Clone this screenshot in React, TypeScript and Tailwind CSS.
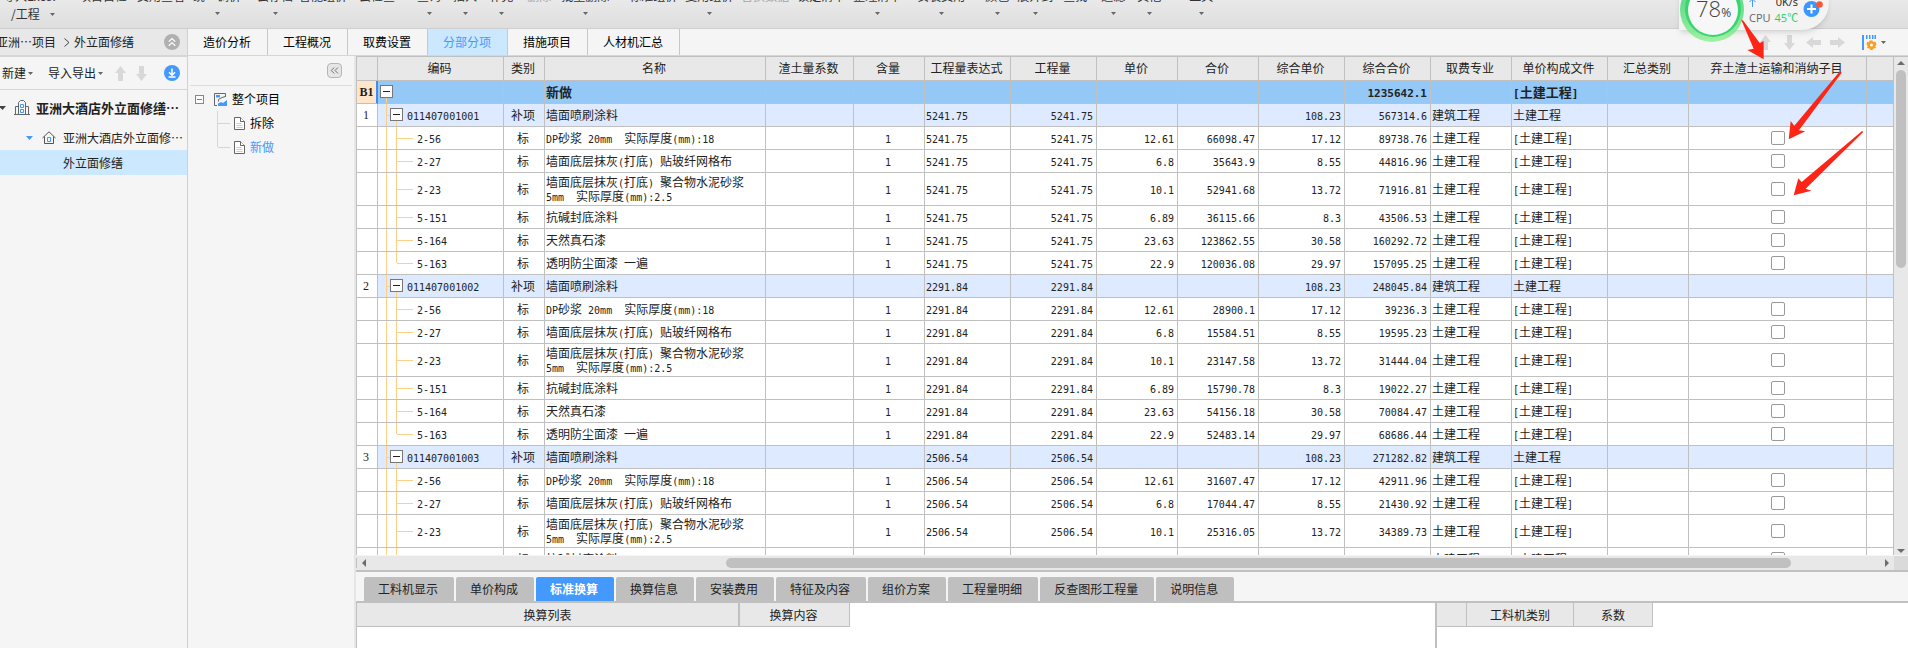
import React from "react";
import clsx from "clsx";
import { ChevronsLeft, ChevronsUp } from "lucide-react";

const ribbonItems = [
  { label: "项目自检", gap: "ml-5" },
  { label: "费用查看", gap: "ml-2.5" },
  { label: "统一调价", gap: "ml-2", menu: true },
  { label: "云存档", gap: "ml-4", menu: true },
  { label: "智能组价", gap: "ml-1.5" },
  { label: "云检查", gap: "ml-3" },
  { label: "查询", gap: "ml-5.5", menu: true },
  { label: "插入", gap: "ml-3", menu: true },
  { label: "补充", gap: "ml-3", menu: true },
  { label: "删除", gap: "ml-3.5", disabled: true },
  { label: "批量删除", gap: "ml-2.5", menu: true },
  { label: "标准组价", gap: "ml-5" },
  { label: "复用组价", gap: "ml-2", menu: true },
  { label: "替换数据", gap: "ml-2", disabled: true },
  { label: "锁定清单", gap: "ml-2" },
  { label: "整理清单", gap: "ml-2", menu: true },
  { label: "安装费用", gap: "ml-4", menu: true },
  { label: "颜色", gap: "ml-5", menu: true },
  { label: "展开到", gap: "ml-2", menu: true },
  { label: "查找", gap: "ml-2.5" },
  { label: "过滤", gap: "ml-3.5", menu: true },
  { label: "其他", gap: "ml-3", menu: true },
  { label: "工具", gap: "ml-7", menu: true },
];

const pageTabs = ["造价分析", "工程概况", "取费设置", "分部分项", "措施项目", "人材机汇总"];

const detailTabs = [
  "工料机显示",
  "单价构成",
  "标准换算",
  "换算信息",
  "安装费用",
  "特征及内容",
  "组价方案",
  "工程量明细",
  "反查图形工程量",
  "说明信息",
];

const columns = [
  { title: "", width: "w-[21px]" },
  { title: "编码", width: "w-[126px]" },
  { title: "类别", width: "w-[41px]" },
  { title: "名称", width: "w-[221px]" },
  { title: "渣土量系数", width: "w-[88px]" },
  { title: "含量", width: "w-[71px]" },
  { title: "工程量表达式", width: "w-[86px]" },
  { title: "工程量", width: "w-[86px]" },
  { title: "单价", width: "w-[81px]" },
  { title: "合价", width: "w-[81px]" },
  { title: "综合单价", width: "w-[86px]" },
  { title: "综合合价", width: "w-[86px]" },
  { title: "取费专业", width: "w-[81px]" },
  { title: "单价构成文件", width: "w-[96px]" },
  { title: "汇总类别", width: "w-[81px]" },
  { title: "弃土渣土运输和消纳子目", width: "w-[178px]" },
  { title: "", width: "" },
];

const items = [
  { code: "2-56", name: "DP砂浆 20mm  实际厚度(mm):18", price: "12.61", full: "17.12" },
  { code: "2-27", name: "墙面底层抹灰(打底) 贴玻纤网格布", price: "6.8", full: "8.55" },
  { code: "2-23", name: "墙面底层抹灰(打底) 聚合物水泥砂浆\n5mm  实际厚度(mm):2.5", price: "10.1", full: "13.72", tall: true },
  { code: "5-151", name: "抗碱封底涂料", price: "6.89", full: "8.3" },
  { code: "5-164", name: "天然真石漆", price: "23.63", full: "30.58" },
  { code: "5-163", name: "透明防尘面漆 一遍", price: "22.9", full: "29.97" },
];

interface Group {
  no: number;
  code: string;
  quantity: string;
  total: string;
  amounts: [string, string][];
}

const groups: Group[] = [
  {
    no: 1,
    code: "011407001001",
    quantity: "5241.75",
    total: "567314.6",
    amounts: [
      ["66098.47", "89738.76"],
      ["35643.9", "44816.96"],
      ["52941.68", "71916.81"],
      ["36115.66", "43506.53"],
      ["123862.55", "160292.72"],
      ["120036.08", "157095.25"],
    ],
  },
  {
    no: 2,
    code: "011407001002",
    quantity: "2291.84",
    total: "248045.84",
    amounts: [
      ["28900.1", "39236.3"],
      ["15584.51", "19595.23"],
      ["23147.58", "31444.04"],
      ["15790.78", "19022.27"],
      ["54156.18", "70084.47"],
      ["52483.14", "68686.44"],
    ],
  },
  {
    no: 3,
    code: "011407001003",
    quantity: "2506.54",
    total: "271282.82",
    amounts: [
      ["31607.47", "42911.96"],
      ["17044.47", "21430.92"],
      ["25316.05", "34389.73"],
      ["17270.06", "20804.28"],
    ],
  },
];

// Latin runs are set half as wide as the Chinese characters around them
const GridText = ({ text, bold }: { text: string; bold?: boolean }) => (
  <span className={clsx("whitespace-pre", bold && "font-bold text-[13px]")}>
    {text.split(/([\x20-\x7e]+)/).map((run, i) =>
      i % 2 ? (
        <span
          key={i}
          className={clsx("leading-none font-['DejaVu_Sans_Mono',monospace]", bold ? "text-[11px]" : "text-[10px]")}
        >
          {run}
        </span>
      ) : (
        run
      ),
    )}
  </span>
);

const Caret = ({ className = "text-[#666]" }: { className?: string }) => (
  <svg width="5" height="3" viewBox="0 0 5 3" fill="currentColor" className={clsx("shrink-0", className)}>
    <path d="M0 0h5L2.5 3z" />
  </svg>
);

const BlockArrow = ({ dir }: { dir: "up" | "down" | "left" | "right" }) => (
  <svg
    width="15"
    height="15"
    viewBox="0 0 15 15"
    fill="#d8d8d8"
    className={clsx(dir === "down" && "rotate-180", dir === "left" && "-rotate-90", dir === "right" && "rotate-90")}
  >
    <path d="M7.5 0 13 7h-3v8H5V7H2z" />
  </svg>
);

const ScrollArrow = ({ d }: { d: string }) => (
  <svg width="8" height="8" viewBox="0 0 8 8" fill="#6b6b75" className="shrink-0">
    <path d={d} />
  </svg>
);

const FileIcon = () => (
  <svg width="11" height="13" viewBox="0 0 11 13" fill="#fff" stroke="#666">
    <path d="M.5.5h6l4 4v8H.5z" />
    <path d="M6.5.5v4h4" />
    <path d="M2.5 6.5h5M2.5 8.5h6M2.5 10.5h6" stroke="#ccc" />
  </svg>
);

const Toggle = () => (
  <button aria-label="折叠" className="flex size-[13px] shrink-0 items-center justify-center border border-[#777] bg-white">
    <span className="h-px w-[7px] bg-[#222]" />
  </button>
);

const Ribbon = () => (
  <header className="h-[29px] shrink-0 overflow-hidden border-b border-[#cfcfcf] bg-linear-to-b from-[#e9e9e9] to-[#dedede] text-[#333]">
    <div className="-mt-2.5 flex items-start whitespace-nowrap leading-3">
      <button className="ml-[3px] w-14 text-left">
        <span className="block">导入Excel</span>
        <span className="mt-1.5 ml-2 flex items-center gap-2.5">
          /工程
          <Caret />
        </span>
      </button>
      {ribbonItems.map((item) => (
        <button
          key={item.label}
          disabled={item.disabled}
          className={clsx("flex flex-col items-center gap-2.5", item.gap, item.disabled && "text-[#a5a5a5]")}
        >
          {item.label}
          {item.menu && <Caret />}
        </button>
      ))}
    </div>
  </header>
);

const Sidebar = () => (
  <aside className="flex w-[188px] shrink-0 flex-col border-r border-[#d0d0d0]">
    <div className="flex h-7 items-center overflow-hidden border-b-2 border-[#d6d6d6] bg-[#e8e8e8] pr-[7px]">
      <span className="-ml-1 whitespace-nowrap">亚洲…项目</span>
      <svg width="6" height="9" viewBox="0 0 6 9" fill="none" stroke="#444" className="ml-2">
        <path d="m.5.5 4.5 4-4.5 4" />
      </svg>
      <span className="ml-1">外立面修缮</span>
      <button aria-label="收起" className="ml-auto flex size-4 items-center justify-center rounded-full bg-[#b0b0b0] text-white">
        <ChevronsUp size={14} />
      </button>
    </div>
    <div className="flex h-[33px] items-center border-b border-[#d6d6d6] pr-[7px] pl-0.5">
      <button className="flex items-center gap-0.5 whitespace-nowrap">
        新建
        <Caret />
      </button>
      <button className="ml-[15px] flex items-center gap-0.5 whitespace-nowrap">
        导入导出
        <Caret />
      </button>
      <button aria-label="上移" className="ml-2.5">
        <BlockArrow dir="up" />
      </button>
      <button aria-label="下移" className="ml-1.5">
        <BlockArrow dir="down" />
      </button>
      <button aria-label="下载" className="ml-auto">
        <svg width="16" height="16" viewBox="0 0 16 16" fill="none" stroke="#fff" strokeWidth="1.5">
          <circle cx="8" cy="8" r="8" fill="#4499ff" stroke="none" />
          <path d="M8 3.500V10M5 7.200 8 10.200l3-3M4.500 12h7" />
        </svg>
      </button>
    </div>
    <ul>
      <li className="flex h-[35px] items-center">
        <svg width="6" height="4" viewBox="0 0 6 4" fill="#444">
          <path d="M-1 0h7L2.500 4z" />
        </svg>
        <svg width="16" height="15" viewBox="0 0 16 15" fill="none" stroke="#666" className="ml-2">
          <path d="M0 14.500h16M1.500 14.500v-8h3M14.500 14.500v-8h-3M4.500 14.500v-12l2-2h3l2 2v12" />
          <path d="M6.500 4.500h3v3h-3zM6.500 9.500h3v3h-3z" stroke="#4499ff" />
        </svg>
        <span className="ml-1.5 text-[13px] font-bold whitespace-nowrap">亚洲大酒店外立面修缮…</span>
      </li>
      <li className="flex h-[25px] items-center">
        <svg width="7" height="4" viewBox="0 0 7 4" fill="#4499ff" className="ml-[26px]">
          <path d="M0 0h7L3.500 4z" />
        </svg>
        <svg width="14" height="13" viewBox="0 0 14 13" fill="none" stroke="#555" className="ml-[9px]">
          <path d="M.5 7 7 .8 13.500 7M2.500 5.500v7h9v-7" />
          <path d="M5.500 6.500h3v4h-3z" stroke="#4499ff" />
        </svg>
        <span className="ml-[7px] whitespace-nowrap">亚洲大酒店外立面修…</span>
      </li>
      <li className="flex h-[25px] items-center bg-[#cce8ff] pl-[63px]">外立面修缮</li>
    </ul>
  </aside>
);

const ProjectTree = () => (
  <nav className="w-[168px] shrink-0 border-r-2 border-[#e6e6e6] px-0.5 text-black">
    <div className="flex h-[30px] items-center justify-end border-b border-[#dcdcdc] pr-2.5">
      <button aria-label="收起" className="flex size-[15px] items-center justify-center rounded-sm border border-[#b5b5b5] bg-[#e6e6e6] text-[#555]">
        <ChevronsLeft size={13} strokeWidth={1.5} />
      </button>
    </div>
    <div className="mt-px flex h-6 items-center">
      <button aria-label="折叠" className="ml-[5px] flex size-[9px] items-center justify-center border border-[#888] bg-white">
        <span className="h-px w-[5px] bg-[#2b9fd9]" />
      </button>
      <svg width="13" height="13" viewBox="0 0 13 13" fill="none" stroke="#666" className="ml-2.5">
        <path d="M11.500 4V.5H.5v12H3M11.500 3.500 8 4.500 4.500 6.500v2" />
        <path d="M4 13v-2.500L7 9l2 1 4-3v6zM2 2h4v2.500H2z" fill="#4499ff" stroke="none" />
      </svg>
      <span className="ml-[5px]">整个项目</span>
    </div>
    <ul>
      {["拆除", "新做"].map((name, i) => (
        <li key={name} className="flex h-6 items-center">
          <span className={clsx("ml-[27px] w-px self-start bg-[#ffcf87]", i ? "h-3" : "h-6")} />
          <span className="h-px w-3 bg-[#ffcf87]" />
          <span className="ml-1">
            <FileIcon />
          </span>
          <a href="#" className={clsx("ml-[5px]", i === 1 && "text-[#4499ff]")}>
            {name}
          </a>
        </li>
      ))}
    </ul>
  </nav>
);

const TabBar = () => (
  <div className="flex h-[27px] shrink-0 border-b border-[#d6d6d6] text-black">
    {pageTabs.map((tab) => (
      <button
        key={tab}
        className={clsx(
          "border-r border-[#c8c8c8] pr-4 pl-[15px] whitespace-nowrap",
          tab === "分部分项" && "bg-[#cce8ff] text-[#4499ff]",
        )}
      >
        {tab}
      </button>
    ))}
    <div className="ml-auto flex items-center gap-[9px] pr-[22px]">
      <button aria-label="上移">
        <BlockArrow dir="up" />
      </button>
      <button aria-label="下移">
        <BlockArrow dir="down" />
      </button>
      <button aria-label="左移">
        <BlockArrow dir="left" />
      </button>
      <button aria-label="右移">
        <BlockArrow dir="right" />
      </button>
      <button aria-label="列设置" className="ml-2 flex items-center gap-1">
        <svg width="15" height="15" viewBox="0 0 15 15">
          <path d="M0 0h2v15H0zM4 0h1.500v4H4zM7 0h1.500v4H7zM10 0h1.500v4H10zM12.500 0H14v4h-1.500z" fill="#4499ff" />
          <path d="M7.500 5.500h3l.5 1.500 2.500-.2L14.500 9.500 13.200 11l.8 2-2.500.5-1 1.500h-2l-1-1.500-2.500-.5.700-2L4.500 9.500 5 7l2 .2z" fill="#ff9d1e" />
          <circle cx="9.500" cy="10" r="1.500" fill="#fff" />
        </svg>
        <Caret />
      </button>
    </div>
  </div>
);

const Cell = ({ children, className }: { children?: React.ReactNode; className?: string }) => (
  <td className={clsx("overflow-hidden border-r border-b border-[#c0c0c0] pt-0 pr-[3px] pb-px pl-px", className)}>
    {children}
  </td>
);

const Num = ({ value, bold }: { value?: string; bold?: boolean }) => (
  <Cell className="text-right">{value && <GridText text={value} bold={bold} />}</Cell>
);

const Guide = ({ className }: { className: string }) => <span className={clsx("shrink-0 bg-[#ffcf87]", className)} />;

const GroupRows = ({ group }: { group: Group }) => (
  <>
    <tr className="bg-[#deeaff]">
      <Cell className="bg-white text-center font-['Liberation_Serif',serif]">{group.no}</Cell>
      <td className="border-r border-b border-[#c0c0c0] p-0">
        <div className="flex h-[22px] items-center pl-2">
          <Guide className="h-full w-px" />
          <Guide className="h-px w-[3px]" />
          <div className="flex h-full flex-col items-center pt-1">
            <Toggle />
            <Guide className="h-[5px] w-px" />
          </div>
          <span className="pb-px pl-1">
            <GridText text={group.code} />
          </span>
        </div>
      </td>
      <Cell className="text-center">补项</Cell>
      <Cell>墙面喷刷涂料</Cell>
      <Cell />
      <Cell />
      <Cell>
        <GridText text={group.quantity} />
      </Cell>
      <Num value={group.quantity} />
      <Cell />
      <Cell />
      <Num value="108.23" />
      <Num value={group.total} />
      <Cell>建筑工程</Cell>
      <Cell>土建工程</Cell>
      <Cell />
      <Cell />
      <Cell />
    </tr>
    {group.amounts.map(([amount, total], i) => {
      const item = items[i];
      return (
        <tr key={item.code} className="bg-white">
          <Cell />
          <td className="border-r border-b border-[#c0c0c0] p-0">
            <div className={clsx("flex items-center pl-2", item.tall ? "h-8" : "h-[22px]")}>
              <Guide className="h-full w-px" />
              <Guide className={clsx("ml-[9px] w-px self-start", i === items.length - 1 ? "h-1/2" : "h-full")} />
              <Guide className="h-px w-4" />
              <span className="pb-px pl-1">
                <GridText text={item.code} />
              </span>
            </div>
          </td>
          <Cell className="text-center">标</Cell>
          <Cell className="leading-[14px]">
            <GridText text={item.name} />
          </Cell>
          <Cell />
          <Cell className="text-center">
            <GridText text="1" />
          </Cell>
          <Cell>
            <GridText text={group.quantity} />
          </Cell>
          <Num value={group.quantity} />
          <Num value={item.price} />
          <Num value={amount} />
          <Num value={item.full} />
          <Num value={total} />
          <Cell>土建工程</Cell>
          <Cell>
            <GridText text="[土建工程]" />
          </Cell>
          <Cell />
          <td className="border-r border-b border-[#c0c0c0] p-0">
            <input
              type="checkbox"
              aria-label={`弃土渣土运输和消纳子目 ${item.code}`}
              className="mx-auto block size-3.5 appearance-none rounded-xs border border-[#999] bg-white"
            />
          </td>
          <Cell />
        </tr>
      );
    })}
  </>
);

const CostTable = () => (
  <div className="min-w-0 flex-1 overflow-hidden border-l border-[#c0c0c0] bg-white">
    <table className="w-full table-fixed border-separate border-spacing-0 leading-4 whitespace-nowrap text-[#222]">
      <colgroup>
        {columns.map((col, i) => (
          <col key={i} className={col.width} />
        ))}
      </colgroup>
      <thead>
        <tr className="h-6 bg-[#e8e8e8]">
          {columns.map((col, i) => (
            <th key={i} className="border-r border-b border-[#c0c0c0] p-0 pr-0.5 pb-0.5 font-normal">
              {col.title}
            </th>
          ))}
        </tr>
      </thead>
      <tbody>
        <tr className="bg-[#93c8f7]">
          <td className="border-r-2 border-b border-r-[#3d8ff5] border-b-[#c0c0c0] bg-[#ffe6c8] p-0 text-center font-['Liberation_Serif',serif] font-bold">
            B1
          </td>
          <td className="border-r border-b border-[#c0c0c0] p-0">
            <div className="flex h-[22px] pl-0.5">
              <div className="flex flex-col items-center pt-1">
                <Toggle />
                <Guide className="h-[5px] w-px" />
              </div>
            </div>
          </td>
          <Cell />
          <Cell>
            <GridText text="新做" bold />
          </Cell>
          <Cell />
          <Cell />
          <Cell />
          <Cell />
          <Cell />
          <Cell />
          <Cell />
          <Num value="1235642.1" bold />
          <Cell />
          <Cell>
            <GridText text="[土建工程]" bold />
          </Cell>
          <Cell />
          <Cell />
          <Cell />
        </tr>
        {groups.map((group) => (
          <GroupRows key={group.no} group={group} />
        ))}
      </tbody>
    </table>
  </div>
);

const DetailPanel = () => (
  <section className="h-[78px] shrink-0 border-t-2 border-[#c0c0c0]">
    <div className="flex h-[31px] items-end gap-0.5 border-b-2 border-[#c0c0c0] pl-2">
      {detailTabs.map((tab) => (
        <button
          key={tab}
          className={clsx(
            "h-6 rounded-t-xs pr-4 pl-3.5 whitespace-nowrap",
            tab === "标准换算" ? "bg-[#4499ff] font-bold text-white" : "bg-[#bfbfbf] text-[#222]",
          )}
        >
          {tab}
        </button>
      ))}
    </div>
    <div className="flex h-[45px] bg-white">
      <div className="flex-1 border-l border-[#c0c0c0]">
        <table className="border-separate border-spacing-0">
          <thead>
            <tr className="h-6 bg-[#e8e8e8]">
              <th className="w-[383px] border-r-2 border-b border-[#c0c0c0] p-0 font-normal">换算列表</th>
              <th className="w-[110px] border-r border-b border-[#c0c0c0] p-0 pr-0.5 font-normal">换算内容</th>
            </tr>
          </thead>
        </table>
      </div>
      <div className="w-[473px] border-l-2 border-[#c0c0c0]">
        <table className="border-separate border-spacing-0">
          <thead>
            <tr className="h-6 bg-[#e8e8e8]">
              <th className="w-[30px] border-r border-b border-[#c0c0c0] p-0" />
              <th className="w-[107px] border-r border-b border-[#c0c0c0] p-0 font-normal">工料机类别</th>
              <th className="w-[79px] border-r border-b border-[#c0c0c0] p-0 font-normal">系数</th>
            </tr>
          </thead>
        </table>
      </div>
    </div>
  </section>
);

// floating system monitor, partly above the top edge of the window
const MonitorWidget = () => (
  <div className="absolute -top-6 right-[79px] flex h-[54px] w-[150px] items-center rounded-r-full bg-[#f3f3f3] shadow-md">
    <svg width="70" height="70" viewBox="0 0 70 70" className="absolute -top-1 left-0">
      <defs>
        <linearGradient id="ring" x1="0" y1="0" x2="0" y2="1">
          <stop offset="0.4" stopColor="#3fd873" />
          <stop offset="1" stopColor="#8df08f" />
        </linearGradient>
      </defs>
      <ellipse cx="33" cy="38" rx="32" ry="32" fill="url(#ring)" opacity="0.8" />
      <circle cx="34" cy="37" r="28" fill="#38d66e" />
      <circle cx="34" cy="38" r="25" fill="#f7f7f7" />
    </svg>
    <div className="absolute top-5 left-[17px] flex items-baseline font-['Open_Sans',sans-serif] leading-6 text-[#444]">
      <span className="text-[22px] font-light">78</span>
      <span className="text-xs">%</span>
    </div>
    <div className="absolute top-[18px] left-[70px] w-[49px] font-['Open_Sans','Noto_Sans_CJK_SC',sans-serif] leading-4">
      <div className="flex items-center justify-between text-[11px] text-[#222]">
        <svg width="7" height="9" viewBox="0 0 7 9" fill="none" stroke="#4499ff">
          <path d="M3.500 9V1M.5 4l3-3 3 3" />
        </svg>
        0K/s
      </div>
      <div className="flex gap-1 text-[11px] text-[#666]">
        CPU <span className="text-[#19d36b]">45℃</span>
      </div>
    </div>
    <svg width="20" height="20" viewBox="0 0 20 20" className="absolute top-[23px] left-[124px]">
      <circle cx="8.500" cy="10" r="8" fill="#3a97ff" />
      <path d="M4 10h9M8.500 5.500v9" stroke="#fff" strokeWidth="2" />
      <circle cx="16.500" cy="5.500" r="3.300" fill="#ff5630" />
    </svg>
  </div>
);

const RedArrows = () => (
  <svg width="268" height="210" viewBox="0 0 804 630" fill="#ff2516" className="pointer-events-none absolute top-0 right-0">
    <path d="M303 58 310 62 359 129 371 123 371 178 322 150 341 146z" />
    <path d="M601 212 605 218 477 391 496 394 446 418 452 363 463 377z" />
    <path d="M667 392 669 397 497 566 514 572 461 586 475 535 485 546z" />
  </svg>
);

const App = () => {
  return (
    <div className="relative flex h-screen flex-col overflow-hidden bg-[#f5f5f5] font-['Noto_Sans_CJK_SC',sans-serif] text-[12px] leading-4 text-[#222]">
      <Ribbon />
      <div className="flex min-h-0 flex-1">
        <Sidebar />
        <div className="flex min-w-0 flex-1 flex-col">
          <TabBar />
          <div className="flex min-h-0 flex-1">
            <ProjectTree />
            <main className="flex min-w-0 flex-1 flex-col border-t border-[#c0c0c0]">
              <div className="flex min-h-0 flex-1 pb-px">
                <CostTable />
                <div className="flex w-3.5 shrink-0 flex-col items-center bg-[#e8e8e8] pt-0.5">
                  <ScrollArrow d="M0 6h8L4 2z" />
                  <div className="mt-[3px] h-[198px] w-2.5 rounded-full bg-[#c0c0c0]" />
                  <div className="mt-auto">
                    <ScrollArrow d="M0 2h8L4 6z" />
                  </div>
                </div>
              </div>
              <div className="flex h-3.5 shrink-0 items-center bg-[#e8e8e8]">
                <div className="flex flex-1 items-center border-l border-[#c0c0c0] px-[3px]">
                  <ScrollArrow d="M6 0v8L2 4z" />
                  <div className="ml-[358px] h-2.5 flex-1 rounded-full bg-[#c0c0c0]" />
                  <div className="ml-[92px]">
                    <ScrollArrow d="M2 0v8l4-4z" />
                  </div>
                </div>
                <div className="size-3.5 bg-[#dadada]" />
              </div>
              <DetailPanel />
            </main>
          </div>
        </div>
      </div>
      <MonitorWidget />
      <RedArrows />
    </div>
  );
};

export default App;
